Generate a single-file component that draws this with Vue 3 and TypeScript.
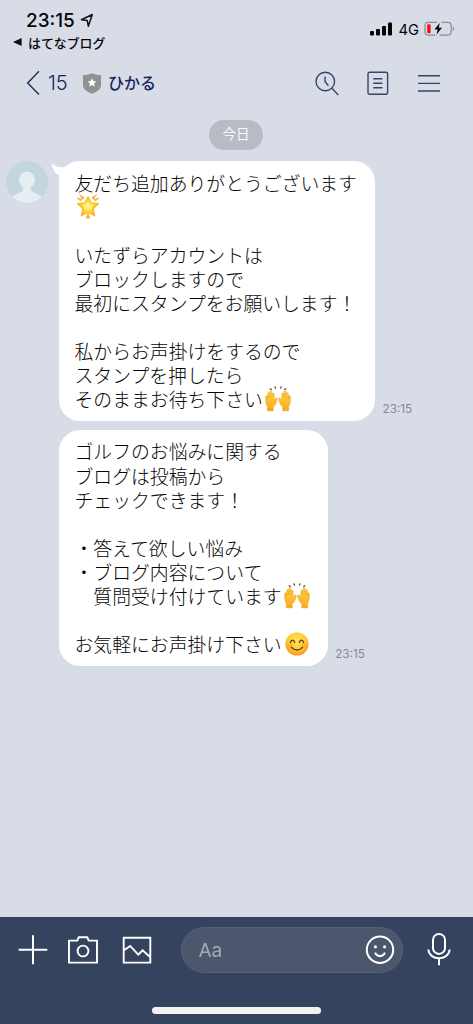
<script setup lang="ts">
type Emoji = 'star' | 'hands' | 'smile'

interface Line {
  text: string
  emoji?: Emoji
}

interface Message {
  id: number
  lines: Line[]
  time: string
  first: boolean
}

const messages: Message[] = [
  {
    id: 1,
    first: true,
    time: '23:15',
    lines: [
      { text: '友だち追加ありがとうございます' },
      { text: '', emoji: 'star' },
      { text: '' },
      { text: 'いたずらアカウントは' },
      { text: 'ブロックしますので' },
      { text: '最初にスタンプをお願いします！' },
      { text: '' },
      { text: '私からお声掛けをするので' },
      { text: 'スタンプを押したら' },
      { text: 'そのままお待ち下さい', emoji: 'hands' },
    ],
  },
  {
    id: 2,
    first: false,
    time: '23:15',
    lines: [
      { text: 'ゴルフのお悩みに関する' },
      { text: 'ブログは投稿から' },
      { text: 'チェックできます！' },
      { text: '' },
      { text: '・答えて欲しい悩み' },
      { text: '・ブログ内容について' },
      { text: '　質問受け付けています', emoji: 'hands' },
      { text: '' },
      { text: 'お気軽にお声掛け下さい', emoji: 'smile' },
    ],
  },
]
</script>

<template>
  <div class="screen">
    <svg class="defs" width="0" height="0" aria-hidden="true">
      <defs>
        <radialGradient id="gStar" cx="50%" cy="48%" r="52%">
          <stop offset="0" stop-color="#fff9a8" />
          <stop offset="0.5" stop-color="#ffe13e" />
          <stop offset="1" stop-color="#fdb515" />
        </radialGradient>
        <linearGradient id="gHand" x1="0" y1="0" x2="0" y2="1">
          <stop offset="0" stop-color="#ffd146" />
          <stop offset="1" stop-color="#f6ad20" />
        </linearGradient>
        <radialGradient id="gFace" cx="50%" cy="38%" r="65%">
          <stop offset="0" stop-color="#ffe85a" />
          <stop offset="0.6" stop-color="#ffca32" />
          <stop offset="1" stop-color="#f08c1c" />
        </radialGradient>
      </defs>
    </svg>

    <header class="status">
      <div class="status-left">
        <div class="clock">
          <span>23:15</span>
          <svg width="14" height="15" viewBox="0 0 14 15">
            <path d="M1.4 6.7 12.3 1.5 8.3 13.2 7.2 7.4Z" fill="none" stroke="#111" stroke-width="1.5" stroke-linejoin="round" />
          </svg>
        </div>
        <div class="back-app">
          <svg width="9" height="8" viewBox="0 0 9 8"><path d="M0 4 8.6 0V8Z" fill="#111" /></svg>
          <span>はてなブログ</span>
        </div>
      </div>
      <div class="status-right">
        <svg class="signal" width="22" height="14" viewBox="0 0 22 14" fill="#050505">
          <rect x="0" y="9" width="4" height="4.5" rx="1" />
          <rect x="6" y="7" width="4" height="6.5" rx="1" />
          <rect x="12" y="4" width="4" height="9.5" rx="1" />
          <rect x="18" y="0.5" width="4" height="13" rx="1" />
        </svg>
        <span class="net">4G</span>
        <svg class="battery" width="32" height="16" viewBox="0 0 32 16">
          <path d="M12.8 1.3H4.5C2.2 1.3 1 2.5 1 4.8v5.9c0 2.3 1.2 3.4 3.5 3.4h6.8M17.5 1.3h6.2c2.3 0 3.5 1.2 3.5 3.5v5.9c0 2.3-1.2 3.4-3.5 3.4h-8.2" fill="none" stroke="#8a8c93" stroke-width="1.2" />
          <path d="M28.8 5.5c1.8.8 1.8 3.8 0 4.6Z" fill="#8a8c93" />
          <rect x="3.2" y="3.3" width="3.4" height="8.9" rx="1.2" fill="#fc0d0d" />
          <path d="M15.8 1.8 10.5 8.5h3.2L12.4 13.8 18 6.8h-3.3Z" fill="#050505" />
        </svg>
      </div>
    </header>

    <nav class="nav">
      <svg class="chevron" width="15" height="26" viewBox="0 0 15 26">
        <path d="M13 1.2 1.7 13 13 24.6" fill="none" stroke="#20335f" stroke-width="1.5" />
      </svg>
      <span class="count">15</span>
      <svg class="shield" width="18" height="21" viewBox="0 0 18 21">
        <path d="M9 .3c2.4 1.2 5.2 1.7 9 1.8v10.2c0 4.2-4.3 6.4-9 8.5-4.7-2.1-9-4.3-9-8.5V2.1C3.8 2 6.6 1.5 9 .3Z" fill="#929292" />
        <path d="m9 5.3 1.300 2.800 3 .35-2.200 2.100.6 3L9 12.100l-2.700 1.450.6-3-2.200-2.100 3-.35Z" fill="#fff" />
      </svg>
      <span class="name">ひかる</span>
      <div class="tools">
        <svg width="24" height="25" viewBox="0 0 24 25" fill="none" stroke="#35456a" stroke-width="1.4">
          <circle cx="10.3" cy="10.5" r="9.3" />
          <path d="M10.1 5.400v5.400l3.300 3.900M16.900 17.200l6.400 6.800" />
        </svg>
        <svg width="22" height="25" viewBox="0 0 22 25" fill="none" stroke="#35456a" stroke-width="1.4">
          <rect x="1" y="1.3" width="19.6" height="22" rx="1.5" />
          <path d="M6.200 7.700h9.200M6.200 12.200h9.200M6.200 16.700h9.200" />
        </svg>
        <svg class="menu" width="22" height="25" viewBox="0 0 22 25" fill="none" stroke="#35456a" stroke-width="1.4">
          <path d="M0 4.800h22M0 12.400h22M0 20h22" />
        </svg>
      </div>
    </nav>

    <main class="chat">
      <div class="date">今日</div>
      <div v-for="m in messages" :key="m.id" class="row">
        <div class="avatar-slot">
          <svg v-if="m.first" width="42" height="42" viewBox="0 0 42 42">
            <clipPath id="avatarClip"><circle cx="21" cy="21" r="21" /></clipPath>
            <circle cx="21" cy="21" r="21" fill="#c2d6df" />
            <path clip-path="url(#avatarClip)" d="M21 10.800c5 0 7.800 3.200 7.600 7.600.9.300.8 2.900-.7 3.400-.6 2.300-1.900 3.900-3 4.700v1.800c0 3.600 7.500 3.600 11.600 8.400V43H5.500v-6.300c4.100-4.800 11.600-4.800 11.600-8.400v-1.800c-1.100-.8-2.400-2.400-3-4.700-1.500-.5-1.600-3.100-.7-3.400-.2-4.400 2.600-7.600 7.600-7.600Z" fill="#e5eef2" />
          </svg>
        </div>
        <div class="bubble">
          <svg v-if="m.first" class="tail" width="30" height="26" viewBox="0 0 30 26">
            <path d="M.6 1.200C2.500 4.600 6.500 6.500 11.500 6.300 17.500 6.100 20 1.500 27 .3V24H8V14C4 12.300.8 7.500.6 1.200Z" fill="#fff" />
          </svg>
          <div v-for="(line, i) in m.lines" :key="i" class="line">
            <span v-if="line.text">{{ line.text }}</span>
            <svg v-if="line.emoji === 'star'" class="emoji-star" width="26" height="26" viewBox="0 0 26 26">
              <path d="m13 3.800 3 6 7.500.900-5.500 5 1.800 7.100L13 19.500l-6.800 3.300L8 15.700l-5.500-5L10 9.800Z" fill="url(#gStar)" stroke="#fbb62b" stroke-width="1.2" stroke-linejoin="round" />
              <path d="m7.800 6.600-3.200-5 4.400 3Zm10.400 0 3.200-5-4.400 3ZM5.500 8 2 4.800l4.600 1.400ZM20.500 8 24 4.800l-4.600 1.400ZM13 20.500l-1.800 4.600h3.600Z" fill="#f5a32d" stroke="#f8b737" stroke-width=".7" />
            </svg>
            <svg v-else-if="line.emoji === 'hands'" class="emoji" width="26" height="26" viewBox="0 0 26 26">
              <g v-for="side in [0, 1]" :key="side" :transform="side ? 'translate(26 0) scale(-1 1)' : ''">
                <path d="M2.300 25v-4.200C.8 18.200.4 15.300.3 11c0-1.600 1.800-1.700 2-.2l.3 2V7.600c0-1.600 2-1.600 2.200 0V5.800c0-1.700 2.300-1.600 2.300.1v2.200c.1-1.500 2.200-1.400 2.200.2v6.200c.5-1.400 1.400-2.900 2.400-2.700 1.100.3.700 1.600.3 2.900-.7 2.800-1.800 5-3.700 6.200V25Z" fill="url(#gHand)" stroke="#eda623" stroke-width=".4" />
                <path d="M2.600 12.500V8.500M4.900 12V7M7.100 12V8M2.400 22.600h6" fill="none" stroke="#e79b1e" stroke-width=".5" />
                <path d="m5.100 2.700 1.300.7M9.900.8l.6 1.500" stroke="#41434a" stroke-width="1.1" stroke-linecap="round" />
              </g>
            </svg>
            <svg v-else-if="line.emoji === 'smile'" class="emoji" width="26" height="26" viewBox="0 0 26 26">
              <circle cx="13" cy="13" r="11.6" fill="url(#gFace)" />
              <circle cx="5.5" cy="15" r="3" fill="#f3842d" opacity=".3" />
              <circle cx="20.5" cy="15" r="3" fill="#f3842d" opacity=".3" />
              <path d="M6.500 11.500c.7-3.100 3.500-3.100 4.200 0M15.300 11.500c.7-3.100 3.500-3.100 4.200 0M7.500 16.200c2.600 3.700 8.400 3.700 11 0" fill="none" stroke="#6d3b12" stroke-width="1.3" stroke-linecap="round" />
            </svg>
          </div>
        </div>
        <span class="time">{{ m.time }}</span>
      </div>
    </main>

    <footer class="composer">
      <div class="controls">
        <svg class="plus" width="30" height="32" viewBox="0 0 30 32"><path d="M15 1.300v29M.7 15.700h28.600" stroke="#fff" stroke-width="2" /></svg>
        <svg class="camera" width="32" height="32" viewBox="0 0 32 32" fill="none" stroke="#fff" stroke-width="1.9">
          <path d="M2 6.600h8.300l1.400-3.300h8.600l1.400 3.300H30v22H2Z" />
          <circle cx="16" cy="17" r="5.4" />
        </svg>
        <svg class="photo" width="30" height="32" viewBox="0 0 30 32" fill="none" stroke="#fff" stroke-width="1.9">
          <path d="M1.700 3.700h26.600v24.900H1.700ZM1.700 16.500l6.500-4.600 8.100 8.700 4.300-4.300 7.700 7" />
        </svg>
        <div class="field">
          <span>Aa</span>
          <svg width="30" height="30" viewBox="0 0 30 30" fill="none" stroke="#fff" stroke-width="2">
            <circle cx="15" cy="14.7" r="13.2" />
            <path d="M10 17.700c2 4.700 8 4.700 10 0" />
            <circle cx="10.4" cy="11.8" r="1.6" fill="#fff" stroke="none" />
            <circle cx="19.6" cy="11.8" r="1.6" fill="#fff" stroke="none" />
          </svg>
        </div>
        <svg class="mic" width="24" height="36" viewBox="0 0 24 36" fill="none" stroke="#fff" stroke-width="2">
          <rect x="6" y="1.9" width="12" height="20" rx="6" />
          <path d="M1.300 17.500c1.200 11.700 20.200 11.700 21.400 0M12 26.200v7" />
        </svg>
      </div>
      <div class="home"></div>
    </footer>
  </div>
</template>

<style>
body {
  margin: 0;
}
</style>

<style scoped>
.screen {
  width: 473px;
  height: 1024px;
  display: flex;
  flex-direction: column;
  overflow: hidden;
  background: #d8dce6;
  font-family: Inter, "Noto Sans CJK JP", sans-serif;
  color: #050505;
}
.defs {
  position: absolute;
}
svg {
  display: block;
  flex: none;
}
.status {
  height: 56px;
  display: flex;
  justify-content: space-between;
}
.status-left {
  padding: 9px 0 0 13px;
}
.clock {
  display: flex;
  align-items: center;
  gap: 5px;
  height: 22px;
  padding-left: 13px;
  font-size: 18.9px;
  font-weight: 500;
}
.back-app {
  display: flex;
  align-items: center;
  gap: 6px;
  height: 22px;
  font-size: 12.9px;
  font-weight: 500;
}
.status-right {
  display: flex;
  align-items: center;
  height: 16px;
  padding: 21px 17px 0 0;
}
.net {
  margin: 1px 5px 0 6px;
  font-size: 14.8px;
}
.nav {
  height: 54px;
  display: flex;
  align-items: center;
  padding: 0 33px 0 26px;
  color: #14265a;
}
.count {
  width: 34px;
  margin-left: 7px;
  font-size: 20px;
  font-weight: 300;
}
.shield {
  margin-left: 1px;
}
.name {
  margin-left: 7px;
  font-size: 16px;
  font-weight: 500;
  line-height: 24px;
  padding-bottom: 1px;
}
.tools {
  display: flex;
  gap: 28px;
  margin-left: auto;
}
.menu {
  margin-left: 1px;
}
.chat {
  flex: 1;
  display: flex;
  flex-direction: column;
  padding-top: 10px;
}
.date {
  width: 54px;
  height: 30px;
  margin: 0 0 11px 209px;
  border-radius: 15px;
  background: #b7bbc4;
  color: #f6f7f9;
  font-size: 13.5px;
  line-height: 29px;
  text-align: center;
}
.row {
  display: flex;
  align-items: flex-end;
  padding-left: 6px;
  margin-bottom: 9px;
}
.avatar-slot {
  align-self: flex-start;
  width: 53px;
}
.bubble {
  position: relative;
  padding: 9px 18.5px 10px 15.5px;
  border-radius: 21px;
  background: #fff;
}
.tail {
  position: absolute;
  left: -8px;
  top: 0;
}
.line {
  display: flex;
  align-items: center;
  height: 24.1px;
  font-family: "Noto Sans CJK JP", sans-serif;
  font-size: 18.83px;
  font-weight: 300;
  line-height: 23px;
  white-space: pre;
}
.emoji {
  margin: 1px 0 0 2px;
}
.emoji-star {
  margin-top: 0;
}
.time {
  margin: 0 0 4px 7px;
  font-size: 11.8px;
  line-height: 15px;
  color: #868b98;
}
.composer {
  height: 107px;
  background: #36435f;
}
.controls {
  display: flex;
  align-items: center;
  height: 66px;
  padding: 0 22px 0 18px;
}
.camera {
  margin-left: 19px;
}
.photo {
  margin-left: 23px;
}
.field {
  box-sizing: border-box;
  width: 221.5px;
  height: 46px;
  display: flex;
  align-items: center;
  justify-content: space-between;
  margin-left: 29px;
  padding: 0 7px 0 16.5px;
  border: 1px solid #566077;
  border-radius: 23px;
  background: #4c576e;
  color: #a3a9b5;
  font-size: 19px;
}
.mic {
  margin-left: 24px;
}
.home {
  width: 169px;
  height: 7px;
  margin: 24px 0 0 152px;
  border-radius: 4px;
  background: #f2f2f2;
}
</style>
